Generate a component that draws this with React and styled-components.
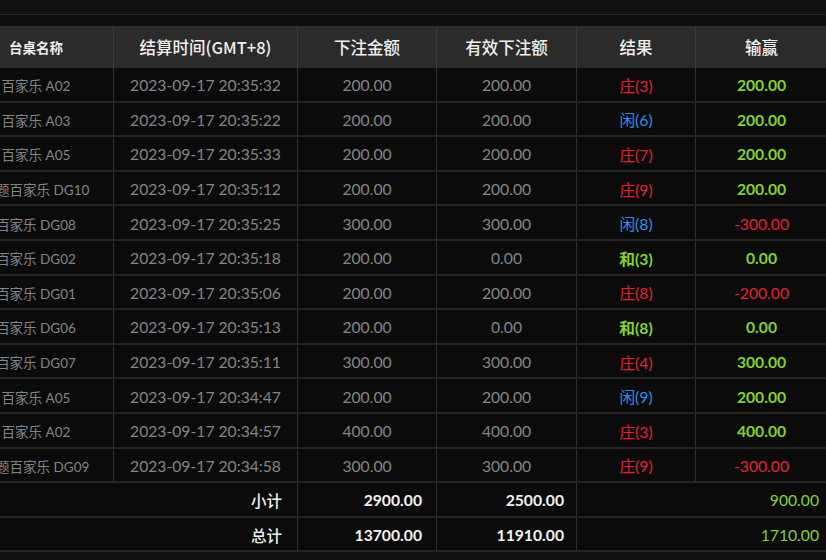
import React, { useLayoutEffect, useRef } from "react";
import styled, { createGlobalStyle } from "styled-components";

const GlobalStyle = createGlobalStyle`
  html, body {
    margin: 0;
    padding: 0;
    background: #111111;
  }
  body {
    font-family: "Lato", "Noto Sans CJK SC", sans-serif;
    overflow: hidden;
  }
`;

const Page = styled.div`
  width: 826px;
  height: 560px;
  display: flex;
  flex-direction: column;
  background: #111111;
`;

const TopBar = styled.div`
  height: 14px;
  border-bottom: 1px solid #262626;
  background: #121212;
`;

const Spacer = styled.div`
  height: 11px;
  background: #0e0e0e;
`;

const Scroller = styled.div`
  overflow: hidden;
  width: 826px;
`;

const Table = styled.table`
  border-collapse: separate;
  border-spacing: 0;
  table-layout: fixed;
  width: 869px;
`;

const Th = styled.th`
  height: 42px;
  padding: 0;
  background: #2b2b2b;
  color: #f0f0f0;
  font-family: "Noto Sans CJK SC", sans-serif;
  font-size: ${(p) => (p.small ? "13.5px" : "16.5px")};
  font-weight: ${(p) => (p.small ? 700 : 500)};
  text-align: center;
  border-right: 1px solid #3a3a3a;
  box-sizing: border-box;
  white-space: nowrap;
`;

const Td = styled.td`
  height: 34.6px;
  box-sizing: border-box;
  padding: 2px ${(p) => (p.pad ? p.pad : "0px")} 0;
  background: #0b0b0b;
  border-right: 1px solid #2f2f2f;
  border-bottom: 2px solid #252525;
  text-align: ${(p) => p.align || "center"};
  color: ${(p) => p.color || "#858585"};
  font-size: 15.7px;
  font-weight: ${(p) => (p.bold ? 700 : 400)};
  white-space: nowrap;
  overflow: visible;
`;

const Name = styled.span`
  font-family: "Lato", "Noto Sans CJK SC", sans-serif;
  font-size: 13.5px;
`;

const Result = styled.span`
  font-family: "Lato", "Noto Sans CJK SC", sans-serif;
  color: ${(p) => p.color};
  font-weight: ${(p) => (p.bold ? 700 : 400)};
`;

const Label = styled.span`
  font-family: "Noto Sans CJK SC", sans-serif;
  font-size: 15.5px;
  font-weight: 500;
  color: #f2f2f2;
`;

const RED = "#e8202c";
const BLUE = "#2f8fe8";
const GREEN = "#80d42a";

const sideColor = { 庄: RED, 闲: BLUE, 和: GREEN };

const rows = [
  ["百家乐 A02", "2023-09-17 20:35:32", "200.00", "200.00", "庄(3)", "200.00"],
  ["百家乐 A03", "2023-09-17 20:35:22", "200.00", "200.00", "闲(6)", "200.00"],
  ["百家乐 A05", "2023-09-17 20:35:33", "200.00", "200.00", "庄(7)", "200.00"],
  ["主题百家乐 DG10", "2023-09-17 20:35:12", "200.00", "200.00", "庄(9)", "200.00"],
  ["百家乐 DG08", "2023-09-17 20:35:25", "300.00", "300.00", "闲(8)", "-300.00"],
  ["百家乐 DG02", "2023-09-17 20:35:18", "200.00", "0.00", "和(3)", "0.00"],
  ["百家乐 DG01", "2023-09-17 20:35:06", "200.00", "200.00", "庄(8)", "-200.00"],
  ["百家乐 DG06", "2023-09-17 20:35:13", "200.00", "0.00", "和(8)", "0.00"],
  ["百家乐 DG07", "2023-09-17 20:35:11", "300.00", "300.00", "庄(4)", "300.00"],
  ["百家乐 A05", "2023-09-17 20:34:47", "200.00", "200.00", "闲(9)", "200.00"],
  ["百家乐 A02", "2023-09-17 20:34:57", "400.00", "400.00", "庄(3)", "400.00"],
  ["主题百家乐 DG09", "2023-09-17 20:34:58", "300.00", "300.00", "庄(9)", "-300.00"],
];

const totals = [
  ["小计", "2900.00", "2500.00", "900.00"],
  ["总计", "13700.00", "11910.00", "1710.00"],
];

const isLoss = (v) => v.startsWith("-");

export default function App() {
  const scrollRef = useRef(null);

  useLayoutEffect(() => {
    if (scrollRef.current) scrollRef.current.scrollLeft = 41;
  }, []);

  return (
    <Page>
      <GlobalStyle />
      <TopBar />
      <Spacer />
      <Scroller ref={scrollRef}>
        <Table>
          <colgroup>
            <col style={{ width: 155 }} />
            <col style={{ width: 184 }} />
            <col style={{ width: 139 }} />
            <col style={{ width: 140 }} />
            <col style={{ width: 119 }} />
            <col style={{ width: 132 }} />
          </colgroup>
          <thead>
            <tr>
              <Th small>台桌名称</Th>
              <Th>结算时间(GMT+8)</Th>
              <Th>下注金额</Th>
              <Th>有效下注额</Th>
              <Th>结果</Th>
              <Th>输赢</Th>
            </tr>
          </thead>
          <tbody>
            {rows.map((r, i) => (
              <tr key={i}>
                <Td>
                  <Name>{r[0]}</Name>
                </Td>
                <Td>{r[1]}</Td>
                <Td>{r[2]}</Td>
                <Td>{r[3]}</Td>
                <Td>
                  <Result color={sideColor[r[4][0]]} bold={r[4][0] === "和"}>
                    {r[4]}
                  </Result>
                </Td>
                <Td color={isLoss(r[5]) ? RED : GREEN} bold={!isLoss(r[5])}>
                  {r[5]}
                </Td>
              </tr>
            ))}
            {totals.map((t) => (
              <tr key={t[0]}>
                <Td colSpan={2} align="right" pad="15px">
                  <Label>{t[0]}</Label>
                </Td>
                <Td align="right" pad="14px" color="#f2f2f2" bold>
                  {t[1]}
                </Td>
                <Td align="right" pad="12px" color="#f2f2f2" bold>
                  {t[2]}
                </Td>
                <Td colSpan={2} align="right" pad="8px" color={GREEN}>
                  {t[3]}
                </Td>
              </tr>
            ))}
          </tbody>
        </Table>
      </Scroller>
    </Page>
  );
}
